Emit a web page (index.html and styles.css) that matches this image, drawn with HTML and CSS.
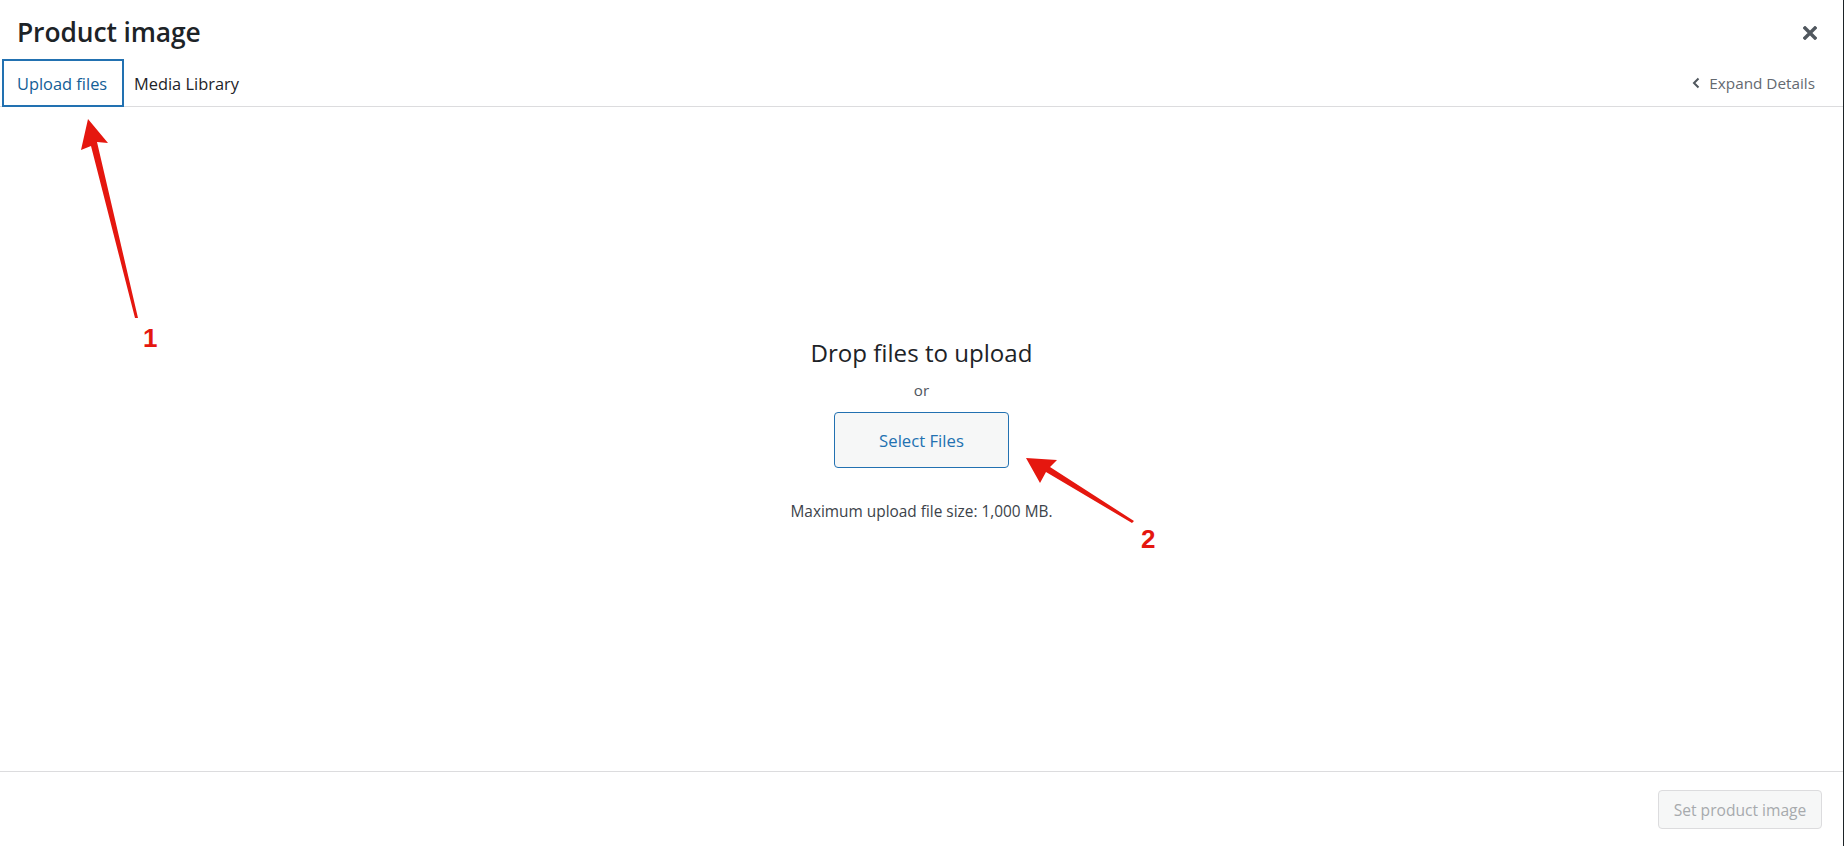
FILE: index.html
```html
<!DOCTYPE html>
<html lang="en">
<head>
<meta charset="utf-8">
<title>Product image</title>
<link rel="stylesheet" href="styles.css">
</head>
<body>
<div class="modal">
  <header class="title-bar">
    <h1 class="title">Product image</h1>
    <button class="close" aria-label="Close">
      <svg width="14" height="14" viewBox="0 0 14 14"><path d="M2 2 L12 12 M12 2 L2 12" stroke="#50575e" stroke-width="3.4" stroke-linecap="square"/></svg>
    </button>
  </header>
  <nav class="tabs-bar">
    <div class="tabs">
      <a class="tab active">Upload files</a>
      <a class="tab">Media Library</a>
    </div>
    <a class="expand">
      <svg width="8" height="12" viewBox="0 0 8 12"><path d="M6.5 1.5 L2 6 L6.5 10.5" fill="none" stroke="#50575e" stroke-width="2"/></svg>
      <span>Expand Details</span>
    </a>
  </nav>
  <main class="content">
    <div class="upload-ui">
      <h2 class="drop-title">Drop files to upload</h2>
      <p class="or">or</p>
      <button class="select-btn">Select Files</button>
      <p class="max-size">Maximum upload file size: 1,000 MB.</p>
    </div>
  </main>
  <footer class="footer">
    <button class="set-btn" disabled>Set product image</button>
  </footer>
  <svg class="annotations" width="1844" height="846" viewBox="0 0 1844 846">
    <path d="M88 119 L108 143 L97 142 L138 318 L135 318 L91 146 L81 150 Z" fill="#e5170f"/>
    <path d="M1026 458 L1057 460 L1050 467 L1134 521 L1132 523 L1046 472 L1040 483 Z" fill="#e5170f"/>
    <text x="143" y="347" class="ann">1</text>
    <text x="1141" y="548" class="ann">2</text>
  </svg>
</div>
</body>
</html>
```
FILE: styles.css
```css
* { box-sizing: border-box; }
html, body { margin: 0; padding: 0; }
body {
  font-family: "Open Sans", "Noto Sans", sans-serif;
  color: #1d2327;
  background: #fff;
  width: 1844px;
  height: 846px;
  overflow: hidden;
}
.modal {
  position: relative;
  width: 1844px;
  height: 846px;
  display: flex;
  flex-direction: column;
  border-right: 1px solid #1d2327;
  background: #fff;
}
.title-bar {
  height: 59px;
  padding-top: 6px;
  display: flex;
  align-items: center;
  justify-content: space-between;
}
.title {
  margin: 0;
  padding-left: 17px;
  font-size: 26.4px;
  font-weight: 600;
  letter-spacing: -0.1px;
  color: #1d2327;
  line-height: 53px;
}
.close {
  width: 60px;
  height: 53px;
  border: 0;
  background: transparent;
  display: flex;
  align-items: center;
  justify-content: center;
  margin-right: 3px;
  padding: 0;
}
.tabs-bar {
  height: 48px;
  display: flex;
  align-items: stretch;
  justify-content: space-between;
  border-bottom: 1px solid #dcdcde;
}
.tabs {
  display: flex;
  align-items: stretch;
  padding-left: 2px;
}
.tab {
  display: flex;
  align-items: center;
  font-size: 16.4px;
  color: #1d2327;
  padding: 0 10px 0 10px;
  text-decoration: none;
  margin-bottom: -1px;
}
.tab.active {
  color: #135e96;
  border: 2px solid #2271b1;
  padding: 0 12px 0 13px;
  width: 122px;
}
.expand {
  display: flex;
  align-items: center;
  gap: 9px;
  padding-right: 28px;
  color: #646970;
  font-size: 15.3px;
}
.content {
  flex: 1;
  display: flex;
  justify-content: center;
  padding-top: 230px;
}
.upload-ui {
  display: flex;
  flex-direction: column;
  align-items: center;
}
.drop-title {
  margin: 0;
  font-size: 24.1px;
  font-weight: 400;
  line-height: 32px;
  color: #1d2327;
}
.or {
  margin: 11px 0 0;
  font-size: 15.2px;
  line-height: 20px;
  color: #50575e;
}
.select-btn {
  margin-top: 12px;
  width: 175px;
  height: 56px;
  border: 1px solid #2271b1;
  border-radius: 4px;
  background: #f6f7f7;
  color: #2271b1;
  font-family: inherit;
  font-size: 16.7px;
  padding: 0;
}
.max-size {
  margin: 33px 0 0;
  font-size: 15.4px;
  line-height: 22px;
  color: #3c434a;
}
.footer {
  height: 75px;
  border-top: 1px solid #dcdcde;
  display: flex;
  justify-content: flex-end;
  padding: 18px 21px 0 0;
}
.set-btn {
  width: 164px;
  height: 39px;
  border: 1px solid #dcdcde;
  border-radius: 4px;
  background: #f6f7f7;
  color: #a7aaad;
  font-family: inherit;
  font-size: 15.6px;
  padding: 0;
}
.annotations {
  position: absolute;
  left: 0;
  top: 0;
  pointer-events: none;
}
.ann {
  font-family: "Liberation Sans", Arial, sans-serif;
  font-weight: 700;
  font-size: 26px;
  fill: #e5170f;
}
```
